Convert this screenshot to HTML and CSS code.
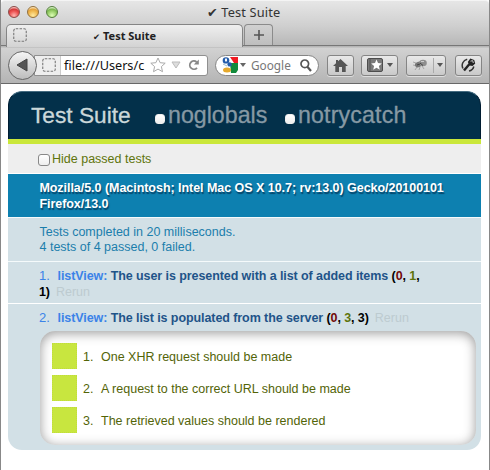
FILE: index.html
```html
<!DOCTYPE html>
<html lang="en">
<head>
<meta charset="utf-8">
<title>✔ Test Suite</title>
<link rel="stylesheet" href="styles.css">
</head>
<body>
<div class="window">
  <header class="chrome">
    <div class="titlebar">
      <div class="lights"><i class="light red"></i><i class="light amber"></i><i class="light green"></i></div>
      <div class="title"><span class="tick">✔</span> Test Suite</div>
    </div>
    <div class="tabs">
      <div class="tab">
        <svg class="blank" viewBox="0 0 14 14"><rect x=".75" y=".75" width="12.5" height="12.5" rx="2"/></svg>
        <span class="tab-title"><span class="tick">✔</span> Test Suite</span>
      </div>
      <div class="new-tab"><svg width="10" height="10" viewBox="0 0 10 10"><path d="M5 0V10M0 5H10" stroke="#555" stroke-width="1.6"/></svg></div>
    </div>
    <div class="toolbar">
      <div class="back"><svg width="12" height="14" viewBox="0 0 12 14"><path d="M1 7L11 1V13Z" fill="#555" stroke="#444"/></svg></div>
      <div class="address">
        <svg class="blank" viewBox="0 0 14 14"><rect x=".75" y=".75" width="12.5" height="12.5" rx="2"/></svg>
        <span class="url">file:///Users/c</span>
        <svg class="star" width="16" height="16" viewBox="0 0 16 16"><path d="M8 1L10.1 5.7L15.2 6.2L11.4 9.6L12.5 14.7L8 12.1L3.5 14.7L4.6 9.6L.8 6.2L5.9 5.7Z" fill="#fff" stroke="#aaa"/></svg>
        <svg class="drop" width="10" height="8" viewBox="0 0 10 8"><path d="M1 1H9L5 7Z" fill="#ddd" stroke="#bbb"/></svg>
        <svg class="reload" width="12" height="12" viewBox="0 0 12 12"><path d="M8.6 3A4.1 4.1 0 1 0 9 8.8" fill="none" stroke="#888" stroke-width="1.8"/><path d="M10.8 .4V5.6H5.8Z" fill="#888"/></svg>
      </div>
      <div class="search">
        <svg width="16" height="16" viewBox="0 0 16 16"><path d="M8 0H16V6H12Z" fill="#ef1b23"/><path d="M8 6H16V13L14 16H9Z" fill="#128a3c"/><ellipse cx="4" cy="3.4" rx="3.3" ry="3.2" fill="#245caa"/><ellipse cx="4" cy="3" rx="1.1" ry="1.7" fill="#fff"/><circle cx="7.6" cy="7.4" r="2.2" fill="#245caa"/><ellipse cx="5" cy="13" rx="4" ry="2.5" fill="#e6a92c"/><path d="M1 7L5 9" stroke="#9bc"/></svg>
        <svg class="caret" width="6" height="4" viewBox="0 0 6 4"><path d="M0 0H6L3 4Z" fill="#666"/></svg>
        <span class="placeholder">Google</span>
        <svg class="lens" width="12" height="13" viewBox="0 0 12 13"><circle cx="4.8" cy="4.8" r="3.8" fill="none" stroke="#555" stroke-width="1.7"/><path d="M7.4 7.8L11 12" stroke="#555" stroke-width="2.2"/></svg>
      </div>
      <div class="button home"><svg width="15" height="13" viewBox="0 0 15 13"><path d="M7.5 0L15 7H12.7V13H9V8H6V13H2.3V7H0L3 4.2V1H5V2.3Z" fill="#555"/></svg></div>
      <div class="button marks">
        <svg width="16" height="14" viewBox="0 0 16 14"><rect x=".5" y=".5" width="15" height="13" rx="1.5" fill="#7a7a7a" stroke="#4d4d4d"/><path d="M3 1V13" stroke="#555"/><path d="M9.5 1.5L11 5.1L14.8 5.4L11.9 7.9L12.8 11.7L9.5 9.7L6.2 11.7L7.1 7.9L4.2 5.4L8 5.1Z" fill="#fff"/></svg>
        <svg class="caret" width="6" height="4" viewBox="0 0 6 4"><path d="M0 0H6L3 4Z" fill="#555"/></svg>
      </div>
      <div class="button bug">
        <svg width="16" height="14" viewBox="0 0 16 14"><path d="M4 5L1 4M5 8L1 7M5 9L3 12M8 9L7 12M10 8L12 11" stroke="#999" stroke-width=".8" fill="none"/><ellipse cx="6.5" cy="6.5" rx="3.6" ry="2.7" transform="rotate(-20 6.5 6.5)" fill="#777"/><ellipse cx="11" cy="5" rx="3.8" ry="3.2" fill="#8e8e8e"/><path d="M8 5L11 7.5M5 7L8 6" stroke="#444" fill="none"/><path d="M9 3.5H12" stroke="#ccc"/></svg>
        <span class="divider"></span>
        <svg class="caret" width="6" height="4" viewBox="0 0 6 4"><path d="M0 0H6L3 4Z" fill="#555"/></svg>
      </div>
      <div class="button wrench"><svg width="15" height="14" viewBox="0 0 15 14"><path d="M2 10.5A6.4 6.4 0 0 1 6.2 1.2M12.8 8.5A6.2 6.2 0 0 1 8 13" fill="none" stroke="#333" stroke-width="1.5"/><path d="M3 12.5L8.5 6" stroke="#222" stroke-width="2.4"/><path d="M6.8 4L9.3 .6L13.2 2L14.2 5.5L11.5 8L8.6 7.4Z" fill="#222"/><path d="M9.5 3.2L11.7 2.6L12.3 5" stroke="#ccc" fill="none"/></svg></div>
    </div>
  </header>
  <main class="page">
    <section class="report">
      <div class="banner">
        <h1>Test Suite</h1>
        <label class="option"><i class="check small"></i><span>noglobals</span></label>
        <label class="option second"><i class="check small"></i><span>notrycatch</span></label>
      </div>
      <label class="filter"><i class="check"></i><span>Hide passed tests</span></label>
      <h2 class="agent">Mozilla/5.0 (Macintosh; Intel Mac OS X 10.7; rv:13.0) Gecko/20100101<br>Firefox/13.0</h2>
      <p class="stats">Tests completed in 20 milliseconds.<br>4 tests of 4 passed, 0 failed.</p>
      <div class="test first"><span class="num">1.</span><b><span class="module">listView:</span> <span class="name">The user is presented with a list of added items</span> (<span class="bad">0</span>, <span class="good">1</span>,</b><br><b>1)</b><span class="rerun">Rerun</span></div>
      <div class="test"><span class="num">2.</span><b><span class="module">listView:</span> <span class="name">The list is populated from the server</span> (<span class="bad">0</span>, <span class="good">3</span>, 3)</b><span class="rerun">Rerun</span></div>
      <div class="asserts">
        <div class="assert"><i></i><span class="n">1.</span><span>One XHR request should be made</span></div>
        <div class="assert"><i></i><span class="n">2.</span><span>A request to the correct URL should be made</span></div>
        <div class="assert"><i></i><span class="n">3.</span><span>The retrieved values should be rendered</span></div>
      </div>
    </section>
  </main>
</div>
</body>
</html>
```
FILE: styles.css
```css
* { box-sizing: border-box; }
body { margin: 0; background: #fff; font-family: "Liberation Sans", Arial, sans-serif; }
svg { display: block; flex: none; }
.window { width: 490px; height: 470px; border: solid #888; border-width: 0 1px; overflow: hidden; }
.chrome { height: 84px; background: linear-gradient(#e6e6e6, #cfcfcf 25px, #b5b5b5 46px, #d2d2d2 47px, #b4b4b4); border-top: 1px solid #f4f4f4; border-bottom: 1px solid #686868; border-radius: 4px 4px 0 0; font-family: "Noto Sans", "Open Sans", sans-serif; }
.titlebar { height: 23px; display: flex; align-items: center; padding: 0 0 2px 7px; }
.lights { display: flex; gap: 7px; }
.light { width: 12px; height: 12px; border-radius: 50%; border: 1px solid #8b4b48; }
.red { background: radial-gradient(circle at 50% 85%, #ffb5b0, #ec5252 45%, #d33b3b 65%, #f8b6b3 80%); }
.amber { border-color: #94703a; background: radial-gradient(circle at 50% 85%, #ffeaa0, #f0b950 45%, #e5a23b 65%, #fae0b0 80%); }
.green { border-color: #547e3d; background: radial-gradient(circle at 50% 85%, #dcffb5, #9bcf6b 45%, #79b64f 65%, #d4edc0 80%); }
.title { margin-left: 149px; font-size: 12.8px; letter-spacing: .15px; color: #333; white-space: nowrap; }
.tick { font-family: "DejaVu Sans", sans-serif; }
.tabs { height: 22px; display: flex; padding-left: 5px; border-bottom: 1px solid #777; }
.tab { width: 237px; height: 23px; padding: 0 0 2px 6px; display: flex; align-items: center; background: linear-gradient(#efefef, #d3d3d3); border: 1px solid #858585; border-bottom: 0; border-radius: 5px 5px 0 0; }
.blank { width: 14px; height: 14px; }
.blank rect { fill: none; stroke: #777; stroke-width: 1.1; stroke-dasharray: 2.5 1.3; }
.tab-title { margin-left: 66px; font-size: 11px; font-weight: 700; color: #222; white-space: nowrap; }
.tab-title .tick { font-size: 8.5px; }
.new-tab { width: 29px; height: 21px; margin-left: 1px; display: flex; align-items: center; justify-content: center; background: linear-gradient(#d1d1d1, #bebebe); border: 1px solid #8b8b8b; border-bottom: 0; border-radius: 4px 4px 0 0; }
.toolbar { height: 38px; display: flex; align-items: center; padding-left: 7px; }
.back { width: 29px; height: 29px; border: 1px solid #666; border-radius: 50%; background: linear-gradient(#f5f5f5, #bdbdbd); display: flex; align-items: center; padding-left: 7px; z-index: 1; flex: none; }
.address { width: 174px; height: 21px; margin-left: -3px; display: flex; align-items: center; border: 1px solid #909090; border-radius: 0 3px 3px 0; background: linear-gradient(90deg, #eee 25px, #ccc 25px, #ccc 26px, #fff 26px); padding-left: 7px; flex: none; }
.url { width: 81px; margin-left: 8px; font-size: 12.7px; color: #111; white-space: nowrap; }
.star { margin-left: 5px; }
.drop { margin-left: 5px; }
.reload { margin-left: 7px; }
.search { width: 104px; height: 21px; margin-left: 7px; border: 1px solid #858585; border-radius: 11px; background: #fff; display: flex; align-items: center; padding-left: 6px; flex: none; }
.caret { margin-left: 2px; }
.placeholder { width: 40px; margin-left: 5px; font-size: 11.8px; color: #777; }
.lens { margin-left: 9px; }
.button { height: 21px; border: 1px solid #858585; border-radius: 3px; background: linear-gradient(#e9e9e9, #c9c9c9); box-shadow: 0 1px #ddd; display: flex; align-items: center; padding-left: 5px; flex: none; }
.home { width: 27px; margin-left: 8px; }
.marks { width: 37px; margin-left: 7px; }
.marks .caret { margin-left: 4px; }
.bug { width: 40px; margin-left: 8px; }
.bug .caret { margin-left: 3px; }
.divider { width: 1px; height: 15px; background: #aaa; margin-left: 5px; }
.wrench { width: 27px; margin-left: 9px; }
.page { padding: 7px 8px 0 7px; }
.report { width: 473px; height: 359px; border-radius: 14px; background: #d2e0e6; overflow: hidden; font-size: 12.5px; line-height: 15px; white-space: nowrap; }
.banner { height: 48px; background: #03304a; border: 1px solid #001c31; border-top-color: #456b80; border-bottom: 0; border-radius: 14px 14px 0 0; display: flex; align-items: center; padding-left: 22px; font-size: 23.2px; color: #8699a4; -webkit-text-stroke: .3px; }
h1 { width: 124px; margin: 0; color: #cbd8da; font-size: 22.7px; font-weight: 400; }
.option { width: 130px; display: flex; align-items: center; }
.option span { margin-left: 3px; }
.second span { letter-spacing: .15px; }
.check { width: 12px; height: 12px; border: 1px solid #888; border-radius: 3px; background: linear-gradient(#fff, #eee); flex: none; }
.small { width: 10px; height: 10px; margin-top: 7px; border-color: #eee; }
.filter { height: 35px; display: flex; align-items: center; border-top: 5px solid #cae73a; border-bottom: 1px solid #fff; background: #eee; color: #5e740b; padding: 2px 0 0 30px; }
.filter span { margin-left: 2px; }
.agent { height: 43px; margin: 0; padding: 6px 0 0 31.4px; background: #0d80b0; color: #fff; font-size: 12.5px; line-height: 16px; letter-spacing: -.04px; text-shadow: 1px 2px 1px rgba(0, 30, 60, .6); }
.stats { height: 45px; margin: 0; padding: 7px 0 0 31.5px; border: solid #f5fafb; border-width: 1px 0; color: #1b7eac; }
.test { padding: 6px 0 0 31px; line-height: 16px; }
.test b { letter-spacing: -.08px; }
.first { height: 42px; border-bottom: 1px solid #fff; }
.num { display: inline-block; width: 18.5px; color: #3b83e8; font-size: 13px; }
.module { color: #3b83e8; }
.name { color: #1f5489; }
.bad { color: #710909; }
.good { color: #5e740b; }
.rerun { margin-left: 6px; color: #bdcbd0; }
.asserts { width: 436px; height: 114px; margin: 5px 0 0 32px; padding: 12px 0 0 12px; border-radius: 15px; background: #fff; box-shadow: inset 0 2px 12px #999; display: grid; grid-auto-rows: 26px; row-gap: 6px; }
.assert { display: flex; align-items: center; color: #536407; }
.assert i { width: 25px; height: 26px; background: #c8e63f; border: 1px dotted #c0dd3b; }
.assert span { padding-top: 2px; }
.n { width: 18px; margin-left: 6px; }
```
